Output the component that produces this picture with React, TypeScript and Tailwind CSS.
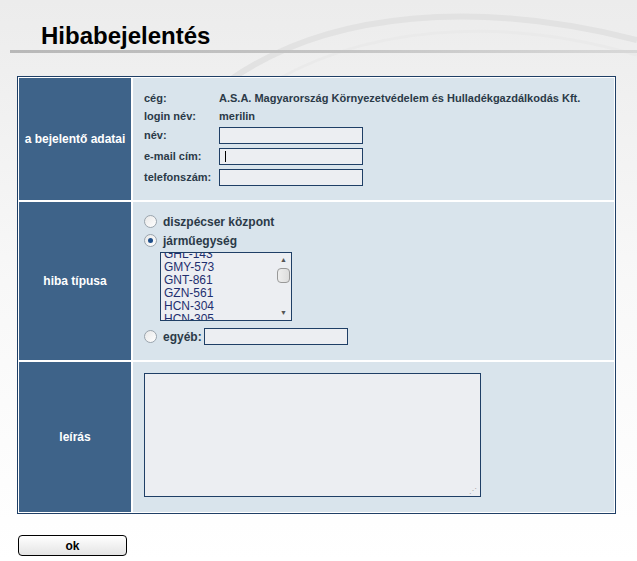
export default function App() {
  const f = { fontFamily: '"Liberation Sans", Arial, sans-serif' };
  const items = ["GHL-143", "GMY-573", "GNT-861", "GZN-561", "HCN-304", "HCN-305"];
  const Radio = ({ on }: { on?: boolean }) => (
    <span className="w-[13px] h-[13px] rounded-full border border-[#9aa4ad] bg-gradient-to-br from-[#e8e8e8] to-white flex items-center justify-center">
      {on && <span className="w-[5px] h-[5px] rounded-full bg-[#1f4f8a]" />}
    </span>
  );
  return (
    <div style={f} className="w-[637px] h-[561px] relative overflow-hidden bg-gradient-to-b from-[#ececec] via-[#f8f8f8] to-white text-[11px] text-[#333]">
      <svg className="absolute left-0 top-0" width="637" height="120">
        <path d="M230 80 C330 10 480 0 637 40" stroke="#e2e2e2" strokeWidth="6" fill="none" />
        <path d="M260 90 C360 25 500 15 637 55" stroke="#eaeaea" strokeWidth="3" fill="none" />
      </svg>
      <div className="relative">
        <div className="pt-[21px] pl-[41px] h-[50px] text-[24px] font-bold text-black leading-[30px]">Hibabejelentés</div>
        <div className="ml-[10px] h-[3px] bg-gradient-to-r from-[#b8b8b8] via-[#c4c4c4] to-[#d8d8d8]" />
        <div className="mt-[23px] ml-[17px] w-[599px] border border-[#1f3f66] bg-white p-px flex flex-col gap-[2px]">
          <div className="flex gap-[2px] h-[122px]">
            <div className="w-[112px] bg-[#3e6389] text-white font-bold text-[12px] flex items-center justify-center">a bejelentő adatai</div>
            <div className="flex-1 bg-[#d9e4ec] pl-[11px] pt-[11px] font-bold text-[#2b3a48]">
              <div className="flex h-[18px] items-center"><span className="w-[75px]">cég:</span><span>A.S.A. Magyarország Környezetvédelem és Hulladékgazdálkodás Kft.</span></div>
              <div className="flex h-[18px] items-center"><span className="w-[75px]">login név:</span><span>merilin</span></div>
              {["név:", "e-mail cím:", "telefonszám:"].map((l, i) => (
                <div key={l} className="flex h-[21px] items-center">
                  <span className="w-[75px]">{l}</span>
                  <span className="w-[144px] h-[17px] border border-[#1f3f66] bg-[#eceef2] flex items-center pl-[5px]">{i === 1 && <span className="w-px h-[11px] bg-black" />}</span>
                </div>
              ))}
            </div>
          </div>
          <div className="flex gap-[2px] h-[158px]">
            <div className="w-[112px] bg-[#3e6389] text-white font-bold text-[12px] flex items-center justify-center">hiba típusa</div>
            <div className="flex-1 bg-[#d9e4ec] pl-[11px] pt-[10px] font-bold text-[#2b3a48] text-[12px]">
              <div className="flex items-center gap-[6px] h-[19px]"><Radio /><span>diszpécser központ</span></div>
              <div className="flex items-center gap-[6px] h-[19px]"><Radio on /><span>járműegység</span></div>
              <div className="ml-[16px] mt-[2px] w-[132px] h-[69px] border border-[#1f3f66] bg-[#eceef2] flex overflow-hidden">
                <div className="flex-1 font-normal text-[#1f2f6f] text-[12px] leading-[13px] pl-[3px] -mt-[5px]">
                  {items.map((t) => <div key={t}>{t}</div>)}
                </div>
                <div className="w-[15px] flex flex-col items-center text-[7px] text-[#555] pt-[2px]">
                  <span>▲</span>
                  <span className="mt-[2px] w-[13px] h-[15px] border border-[#999] bg-gradient-to-r from-[#eee] to-[#ddd] rounded-sm" />
                  <span className="mt-auto mb-[2px]">▼</span>
                </div>
              </div>
              <div className="flex items-center gap-[6px] h-[19px] mt-[6px]"><Radio /><span>egyéb:</span><span className="w-[144px] h-[17px] border border-[#1f3f66] bg-[#eceef2] -ml-[4px]" /></div>
            </div>
          </div>
          <div className="flex gap-[2px] h-[150px]">
            <div className="w-[112px] bg-[#3e6389] text-white font-bold text-[12px] flex items-center justify-center">leírás</div>
            <div className="flex-1 bg-[#d9e4ec] pl-[11px] pt-[11px]">
              <div className="w-[337px] h-[124px] border border-[#1f3f66] bg-[#eceef2] relative">
                <span className="absolute right-[3px] bottom-[1px] text-[8px] text-[#aaa] leading-none">⋰</span>
              </div>
            </div>
          </div>
        </div>
        <button className="mt-[21px] ml-[18px] w-[109px] h-[21px] rounded-[4px] border border-black bg-gradient-to-b from-white to-[#e4e4e4] font-bold text-[12px] text-black">ok</button>
      </div>
    </div>
  );
}
